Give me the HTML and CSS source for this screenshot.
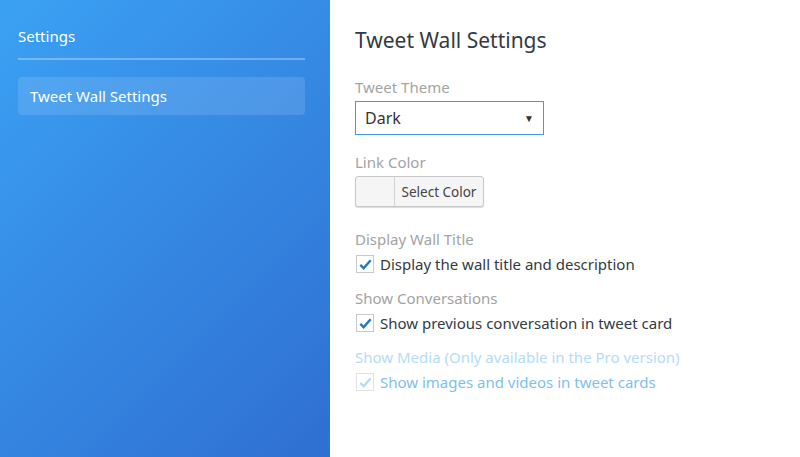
FILE: index.html
```html
<!DOCTYPE html>
<html lang="en">
<head>
  <meta charset="UTF-8">
  <title>Settings</title>
  <link rel="stylesheet" href="styles.css">
</head>
<body>
  <div class="layout">
    <!-- Sidebar -->
    <aside class="sidebar">
      <div class="sidebar-title">Settings</div>
      <a class="nav-item" href="#">Tweet Wall Settings</a>
    </aside>

    <!-- Settings form -->
    <main class="content">
      <h1>Tweet Wall Settings</h1>

      <div class="field">
        <div class="label">Tweet Theme</div>
        <div class="select">
          <span>Dark</span>
          <span class="arrow">&#9660;</span>
        </div>
      </div>

      <div class="field color-field">
        <div class="label">Link Color</div>
        <div class="color-btn">
          <span class="swatch"></span>
          <span class="color-text">Select Color</span>
        </div>
      </div>

      <div class="field check-field">
        <div class="label">Display Wall Title</div>
        <label class="check">
          <span class="box"><svg viewBox="0 0 16 16"><path d="M2.5 8.5l3.5 3.5 7.5-8.5"/></svg></span>
          Display the wall title and description
        </label>
      </div>

      <div class="field check-field">
        <div class="label">Show Conversations</div>
        <label class="check">
          <span class="box"><svg viewBox="0 0 16 16"><path d="M2.5 8.5l3.5 3.5 7.5-8.5"/></svg></span>
          Show previous conversation in tweet card
        </label>
      </div>

      <div class="field check-field disabled">
        <div class="label">Show Media (Only available in the Pro version)</div>
        <label class="check">
          <span class="box"><svg viewBox="0 0 16 16"><path d="M2.5 8.5l3.5 3.5 7.5-8.5"/></svg></span>
          Show images and videos in tweet cards
        </label>
      </div>
    </main>
  </div>
</body>
</html>
```

FILE: styles.css
```css
* {
  box-sizing: border-box;
}

body {
  margin: 0;
  font-family: 'Noto Sans', sans-serif;
  background: #fff;
}

.layout {
  display: flex;
  height: 457px;
}

.sidebar {
  width: 330px;
  flex-shrink: 0;
  padding: 25px 25px 0 18px;
  background: linear-gradient(135deg, #3ba1f3, #2f6fd2);
  color: #fff;
}

.sidebar-title {
  font-size: 15px;
  line-height: 22px;
  padding-bottom: 11px;
  border-bottom: 2px solid rgba(255, 255, 255, 0.3);
  margin-bottom: 17px;
}

.nav-item {
  display: block;
  height: 38px;
  line-height: 38px;
  padding: 0 12px;
  border-radius: 4px;
  background: rgba(255, 255, 255, 0.12);
  color: #fff;
  font-size: 15px;
  text-decoration: none;
}

.content {
  flex: 1;
  padding: 26px 25px 0 25px;
}

h1 {
  margin: 0 0 22px;
  font-size: 21px;
  font-weight: normal;
  line-height: 28px;
  color: #333a44;
}

.field {
  margin-bottom: 16px;
}

.color-field {
  margin-bottom: 21px;
}

.check-field {
  margin-bottom: 12px;
}

.label {
  font-size: 15px;
  line-height: 22px;
  color: #a3a3a3;
  margin-bottom: 3px;
}

.select {
  width: 189px;
  height: 34px;
  margin-top: 1px;
  border: 1px solid #3b9be8;
  display: flex;
  align-items: center;
  justify-content: space-between;
  padding: 0 9px;
  font-size: 16px;
  color: #333;
}

.arrow {
  font-size: 10px;
}

.color-btn {
  display: flex;
  width: 129px;
  height: 31px;
  border: 1px solid #c8c8c8;
  border-radius: 3px;
  background: #f5f5f5;
  box-shadow: 0 1px 1px rgba(0, 0, 0, 0.15);
  font-size: 13.5px;
  color: #444;
}

.swatch {
  width: 39px;
  border-right: 1px solid #d2d2d2;
}

.color-text {
  flex: 1;
  display: flex;
  align-items: center;
  justify-content: center;
}

.check {
  display: flex;
  align-items: center;
  gap: 6px;
  font-size: 15px;
  line-height: 22px;
  color: #333a44;
}

.box {
  width: 18px;
  height: 18px;
  border: 1px solid #c9c9c9;
  background: #fff;
  display: flex;
  align-items: center;
  justify-content: center;
  margin-left: 1px;
}

.box svg {
  width: 15px;
  height: 15px;
  fill: none;
  stroke: #2378bd;
  stroke-width: 2.6;
}

.disabled .label {
  color: #b4dcfa;
}

.disabled .check {
  color: #7cbff2;
}

.disabled .box {
  border-color: #e2e2e2;
}

.disabled .box svg {
  stroke: #b6dcf4;
}
```
